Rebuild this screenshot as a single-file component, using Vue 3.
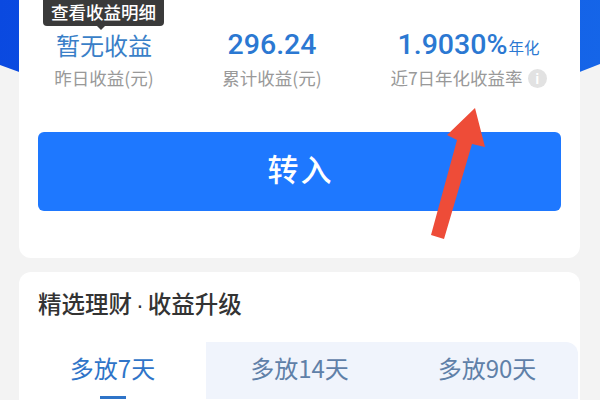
<script setup>
const stats = [
  { value: '暂无收益', label: '昨日收益(元)', cls: 'cjk' },
  { value: '296.24', label: '累计收益(元)', cls: 'num' },
  { value: '1.9030%', unit: '年化', label: '近7日年化收益率', cls: 'num', info: true },
]
const tabs = ['多放7天', '多放14天', '多放90天']
</script>

<template>
  <div class="page">
    <div class="hero"></div>
    <div class="tip">查看收益明细</div>
    <section class="card top">
      <div class="stats">
        <div v-for="s in stats" :key="s.label" class="stat">
          <div class="value" :class="s.cls">{{ s.value }}<span v-if="s.unit" class="unit">{{ s.unit }}</span></div>
          <div class="label">{{ s.label }}<span v-if="s.info" class="info">i</span></div>
        </div>
      </div>
      <button class="cta">转入</button>
    </section>
    <section class="card picks">
      <h2>精选理财<span class="dot">·</span>收益升级</h2>
      <div class="tabs">
        <div class="tab active">{{ tabs[0] }}<i></i></div>
        <div class="rest">
          <div class="tab">{{ tabs[1] }}</div>
          <div class="tab">{{ tabs[2] }}</div>
        </div>
      </div>
    </section>
    <svg class="arrow" viewBox="0 0 120 160" width="120" height="160">
      <path d="M75 18 L85 57 L72 54 L44 149 L31 145 L57 50 L47 45 Z" fill="#ee4c38" />
    </svg>
  </div>
</template>

<style scoped>
.page {
  position: relative;
  width: 600px;
  height: 400px;
  overflow: hidden;
  background: #f3f3f3;
  font-family: "Noto Sans CJK SC", "Noto Sans", sans-serif;
  display: flex;
  flex-direction: column;
  gap: 14px;
  padding: 0 20px 0 19px;
  box-sizing: border-box;
}
.hero {
  position: absolute;
  inset: 0 0 auto 0;
  height: 73px;
  background: linear-gradient(100deg, #0a49e0, #1565e8);
  clip-path: polygon(0 0, 100% 0, 100% 64px, 96.6% 72px, 3.2% 72px, 0 65px);
}
.card {
  position: relative;
  background: #fff;
  border-radius: 12px;
  box-sizing: border-box;
  flex: none;
}
.top {
  height: 258px;
  border-radius: 0 0 12px 12px;
  padding: 27px 19px 0;
}
.stats {
  display: grid;
  grid-template-columns: 132px 204px 189px;
  height: 105px;
}
.stat {
  display: flex;
  flex-direction: column;
  align-items: center;
}
.value {
  height: 36px;
  line-height: 36px;
  color: #2b78d2;
  white-space: nowrap;
}
.value.cjk {
  font-size: 24px;
  font-weight: 400;
  color: #3a7fc8;
}
.value.num {
  font-size: 28.5px;
  font-weight: 500;
  font-family: Roboto, sans-serif;
}
.unit {
  font-family: "Noto Sans CJK SC", sans-serif;
  font-size: 15.5px;
  font-weight: 400;
  margin-left: 1px;
}
.label {
  margin-top: 3px;
  font-size: 17.5px;
  line-height: 24px;
  color: #999;
  white-space: nowrap;
  display: flex;
  align-items: center;
}
.info {
  width: 19px;
  height: 19px;
  margin-left: 5px;
  border-radius: 50%;
  background: #e2e2e2;
  color: #fff;
  font-size: 13px;
  font-weight: 700;
  line-height: 19px;
  text-align: center;
}
.cta {
  display: block;
  width: 523px;
  height: 79px;
  padding: 0 0 8px 2px;
  border: 0;
  border-radius: 6px;
  background: #1e78ff;
  color: #fff;
  font-family: inherit;
  font-size: 31px;
  font-weight: 500;
  letter-spacing: 2px;
}
.picks {
  height: 200px;
  padding-top: 15px;
}
h2 {
  margin: 0;
  padding-left: 19px;
  font-size: 23.5px;
  line-height: 32px;
  font-weight: 500;
  color: #333;
}
.dot {
  font-family: "Liberation Sans", sans-serif;
  margin: 0 4px;
}
.tabs {
  display: flex;
  margin-top: 21px;
  height: 70px;
}
.tab {
  position: relative;
  box-sizing: border-box;
  padding-top: 6px;
  text-align: center;
  font-size: 24px;
  line-height: 40px;
  color: #5f80a8;
}
.tab.active {
  width: 187px;
  color: #2f74c8;
}
.tab.active i {
  position: absolute;
  left: 81px;
  top: 54px;
  width: 26px;
  height: 3px;
  background: #2f74c8;
}
.rest {
  flex: 1;
  margin-right: 2px;
  display: grid;
  grid-template-columns: 187px 1fr;
  background: #f0f4fc;
  border-top-right-radius: 12px;
  height: 57px;
}
.rest .tab:last-child {
  padding-left: 3px;
}
.tip {
  position: absolute;
  z-index: 2;
  left: 43px;
  top: -4px;
  width: 121px;
  height: 30px;
  padding-top: 2px;
  box-sizing: border-box;
  border-radius: 4px;
  background: #3a3a3a;
  color: #fff;
  font-size: 17.5px;
  font-weight: 500;
  line-height: 28px;
  text-align: center;
}
.tip::after {
  content: "";
  position: absolute;
  left: 54px;
  bottom: -4px;
  border: 4px solid transparent;
  border-bottom: 0;
  border-top-color: #3a3a3a;
}
.arrow {
  position: absolute;
  left: 400px;
  top: 90px;
  z-index: 2;
}
</style>
